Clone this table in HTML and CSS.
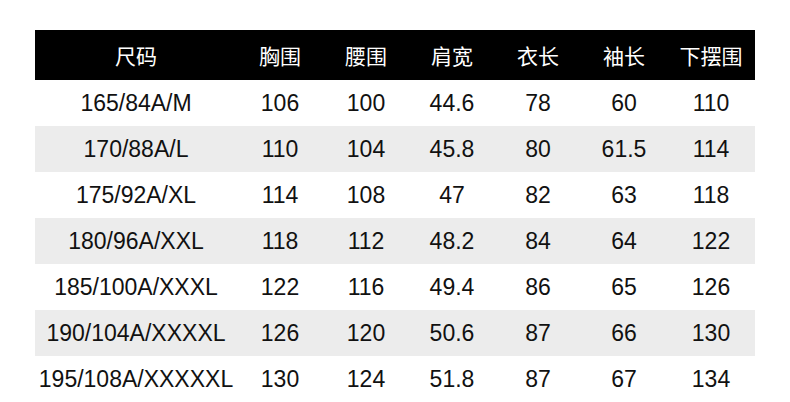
FILE: index.html
```html
<!DOCTYPE html>
<html lang="zh">
<head>
<meta charset="utf-8">
<link rel="stylesheet" href="styles.css">
</head>
<body>
<table class="size-table">
  <colgroup>
    <col class="c-size"><col class="c-n"><col class="c-n"><col class="c-n"><col class="c-n"><col class="c-n"><col class="c-last">
  </colgroup>
  <thead>
    <tr><th>尺码</th><th>胸围</th><th>腰围</th><th>肩宽</th><th>衣长</th><th>袖长</th><th>下摆围</th></tr>
  </thead>
  <tbody>
    <tr><td>165/84A/M</td><td>106</td><td>100</td><td>44.6</td><td>78</td><td>60</td><td>110</td></tr>
    <tr class="alt"><td>170/88A/L</td><td>110</td><td>104</td><td>45.8</td><td>80</td><td>61.5</td><td>114</td></tr>
    <tr><td>175/92A/XL</td><td>114</td><td>108</td><td>47</td><td>82</td><td>63</td><td>118</td></tr>
    <tr class="alt"><td>180/96A/XXL</td><td>118</td><td>112</td><td>48.2</td><td>84</td><td>64</td><td>122</td></tr>
    <tr><td>185/100A/XXXL</td><td>122</td><td>116</td><td>49.4</td><td>86</td><td>65</td><td>126</td></tr>
    <tr class="alt"><td>190/104A/XXXXL</td><td>126</td><td>120</td><td>50.6</td><td>87</td><td>66</td><td>130</td></tr>
    <tr><td>195/108A/XXXXXL</td><td>130</td><td>124</td><td>51.8</td><td>87</td><td>67</td><td>134</td></tr>
  </tbody>
</table>
</body>
</html>
```
FILE: styles.css
```css
html, body {
  margin: 0;
  padding: 0;
  background: #fff;
}
body {
  padding: 30px 35px 0 35px;
  font-family: "Liberation Sans", "Noto Sans CJK SC", sans-serif;
}
.size-table {
  border-collapse: collapse;
  table-layout: fixed;
  width: 720px;
}
.c-size { width: 202px; }
.c-n { width: 86px; }
.c-last { width: 88px; }
.size-table th {
  background: #000;
  color: #fff;
  height: 50px;
  padding: 0;
  font-family: "Noto Sans CJK SC", sans-serif;
  font-weight: normal;
  font-size: 21px;
  text-align: center;
  vertical-align: middle;
}
.size-table td {
  height: 46px;
  padding: 0;
  font-size: 23px;
  color: #111;
  text-align: center;
  vertical-align: middle;
  white-space: nowrap;
}
.size-table tr.alt td {
  background: #ececec;
}
```
